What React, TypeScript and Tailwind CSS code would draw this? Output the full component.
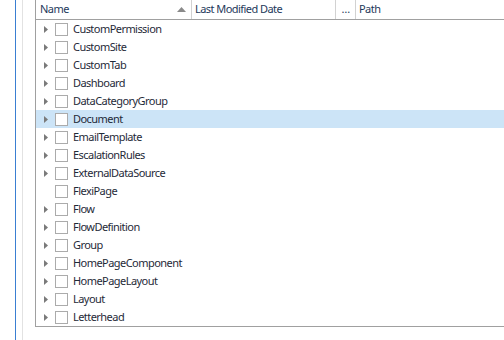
import { ReactNode } from 'react'

// Metadata component types shown in the tree grid
const rows = [
  { name: 'CustomPermission', expandable: true },
  { name: 'CustomSite', expandable: true },
  { name: 'CustomTab', expandable: true },
  { name: 'Dashboard', expandable: true },
  { name: 'DataCategoryGroup', expandable: true },
  { name: 'Document', expandable: true, selected: true },
  { name: 'EmailTemplate', expandable: true },
  { name: 'EscalationRules', expandable: true },
  { name: 'ExternalDataSource', expandable: true },
  { name: 'FlexiPage', expandable: false },
  { name: 'Flow', expandable: true },
  { name: 'FlowDefinition', expandable: true },
  { name: 'Group', expandable: true },
  { name: 'HomePageComponent', expandable: true },
  { name: 'HomePageLayout', expandable: true },
  { name: 'Layout', expandable: true },
  { name: 'Letterhead', expandable: true },
]

function ExpandArrow() {
  return (
    <svg width="4" height="7" viewBox="0 0 4 7" className="shrink-0">
      <polygon points="0,0 4,3.5 0,7" fill="#7a7a7a" />
    </svg>
  )
}

function SortArrow() {
  return (
    <svg width="9" height="5" viewBox="0 0 9 5" className="shrink-0">
      <polygon points="0,5 4.5,0 9,5" fill="#8a8a8a" />
    </svg>
  )
}

function HeaderCell({ children, className }: { children: ReactNode; className: string }) {
  return (
    <div className={`flex h-full items-center border-r border-[#d2d2d2] ${className}`}>
      {children}
    </div>
  )
}

export default function App() {
  return (
    <div
      className="flex h-[340px] w-[504px] overflow-hidden bg-white text-[11px] tracking-[-0.55px]"
      style={{ fontFamily: '"Noto Sans", "Open Sans", sans-serif' }}
    >
      {/* Left chrome: splitter lines */}
      <div className="w-[15px] shrink-0" />
      <div className="w-px shrink-0 bg-[#3a7fd2]" />
      <div className="w-[6px] shrink-0" />
      <div className="w-px shrink-0 bg-[#e2e2e2]" />
      <div className="w-[12px] shrink-0" />

      {/* Tree grid */}
      <div className="flex-1">
        <div className="h-[327px] border-b border-l border-[#a0a0a0]">
          {/* Column headers */}
          <div className="flex h-5 border-b border-[#a0a0a0] text-[#1e395b]">
            <HeaderCell className="w-[156px] justify-between pl-1 pr-[5px]">
              <span>Name</span>
              <SortArrow />
            </HeaderCell>
            <HeaderCell className="w-[144px] pl-[3px]">
              <span>Last Modified Date</span>
            </HeaderCell>
            <HeaderCell className="w-[20px] justify-center">
              <span>…</span>
            </HeaderCell>
            <div className="flex h-full items-center pl-[3px]">
              <span>Path</span>
            </div>
          </div>

          {/* Rows */}
          {rows.map((row) => (
            <div
              key={row.name}
              className={`flex h-[18px] items-center pl-2 text-[#1f2a38] ${
                row.selected ? 'bg-[#cce4f7]' : ''
              }`}
            >
              <div className="flex w-1 justify-center">
                {row.expandable && <ExpandArrow />}
              </div>
              <div className="ml-[7px] h-[13px] w-[13px] shrink-0 border border-[#ababab] bg-white" />
              <span className="ml-[5px] whitespace-nowrap">{row.name}</span>
            </div>
          ))}
        </div>
      </div>
    </div>
  )
}
